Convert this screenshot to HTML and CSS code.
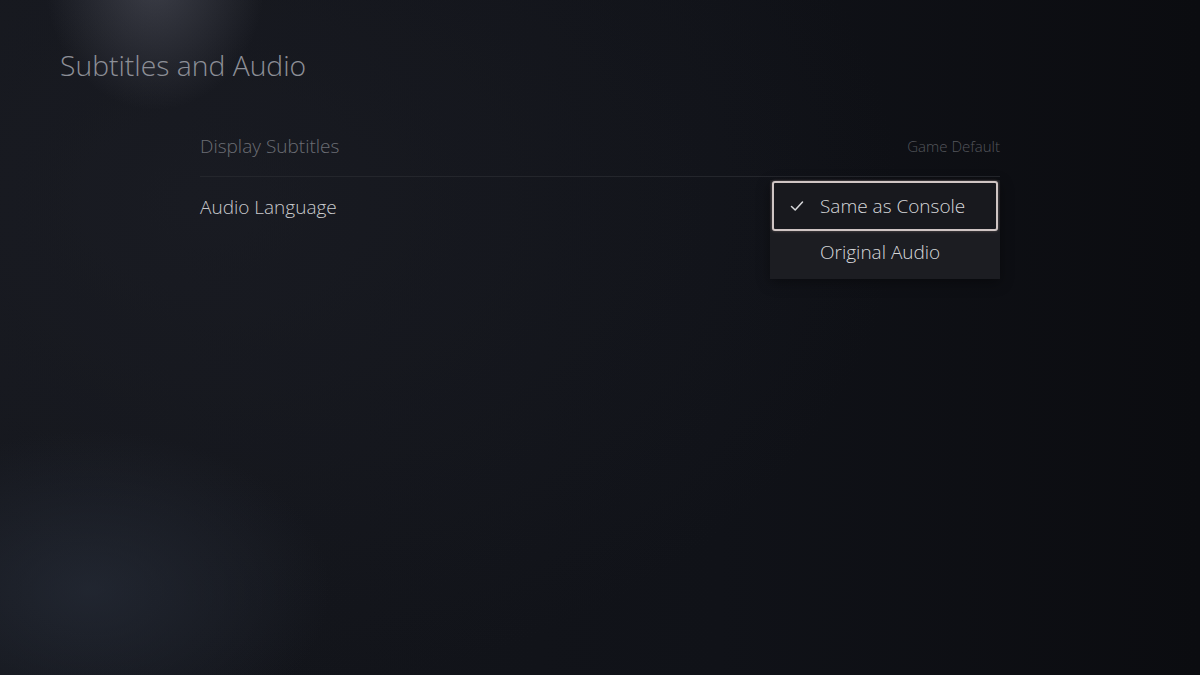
FILE: index.html
```html
<!doctype html>
<html>
	<head>
		<title>Subtitles and Audio</title>
		<link rel="stylesheet" href="styles.css">
	</head>

	<body>
		<div class="screen">
			<h1 class="page-title">Subtitles and Audio</h1>

			<div class="settings-list">
				<div class="setting-row dimmed">
					<span class="setting-label">Display Subtitles</span>
					<span class="setting-value">Game Default</span>
				</div>
				<div class="setting-row active">
					<span class="setting-label">Audio Language</span>

					<div class="dropdown">
						<div class="dropdown-item selected">
							<svg class="check-icon" width="16" height="16" viewBox="0 0 16 16">
								<path d="M2.5 8.5 L6.2 12 L13.5 4" fill="none" stroke="#d8d9dc" stroke-width="1.5" stroke-linecap="round" stroke-linejoin="round"></path>
							</svg>
							<span>Same as Console</span>
						</div>
						<div class="dropdown-item">
							<span>Original Audio</span>
						</div>
					</div>
				</div>
			</div>
		</div>
	</body>
</html>
```

FILE: styles.css
```css
html,
body {
	height: 100%;
}

body {
	margin: 0px;
	font-family: "Open Sans", "Noto Sans", sans-serif;
	background-color: #0f1116;
	color: #c9cacd;
	overflow: hidden;
}

.screen {
	height: 100%;
	box-sizing: border-box;
	padding: 44px 60px 0 60px;
	background:
		radial-gradient(ellipse 110px 130px at 155px -20px, rgba(90, 92, 104, 0.55), rgba(90, 92, 104, 0) 100%),
		radial-gradient(ellipse 240px 160px at 90px 590px, rgba(38, 44, 56, 0.7), rgba(38, 44, 56, 0) 100%),
		radial-gradient(ellipse 700px 500px at 200px 200px, rgba(30, 32, 40, 0.55), rgba(30, 32, 40, 0) 100%),
		linear-gradient(90deg, #14161c 0%, #101218 60%, #0b0c10 100%);
}

.page-title {
	margin: 0px;
	font-size: 28.3px;
	font-weight: 300;
	color: #8d8f97;
	line-height: 42px;
}

.settings-list {
	width: 800px;
	margin-top: 30px;
	margin-left: 140px;
}

.setting-row {
	position: relative;
	display: flex;
	justify-content: space-between;
	align-items: center;
	height: 60px;
}

.setting-row.dimmed {
	border-bottom: 1px solid #24262c;
}

.setting-label {
	font-size: 19px;
	font-weight: 300;
}

.dimmed .setting-label {
	color: #6b6d74;
}

.active .setting-label {
	color: #c9cacd;
}

.setting-value {
	font-size: 15px;
	font-weight: 300;
	color: #54565c;
}

.dropdown {
	position: absolute;
	top: 3px;
	right: 0px;
	width: 230px;
	background-color: #1c1d22;
	box-shadow: 0 4px 12px rgba(0, 0, 0, 0.35);
}

.dropdown-item {
	display: flex;
	align-items: center;
	height: 48px;
	padding-left: 50px;
	padding-bottom: 7px;
	font-size: 19px;
	font-weight: 300;
	color: #d6d7da;
	position: relative;
	box-sizing: border-box;
}

.dropdown-item.selected {
	margin: 1px 2px 0 2px;
	height: 50px;
	padding-left: 46px;
	padding-bottom: 0px;
	border: 2px solid #cfc5c4;
	border-radius: 3px;
	background-color: #18191e;
	box-shadow: 0 0 3px rgba(230, 200, 190, 0.35);
}

.check-icon {
	position: absolute;
	left: 15px;
	top: 15px;
}
```
